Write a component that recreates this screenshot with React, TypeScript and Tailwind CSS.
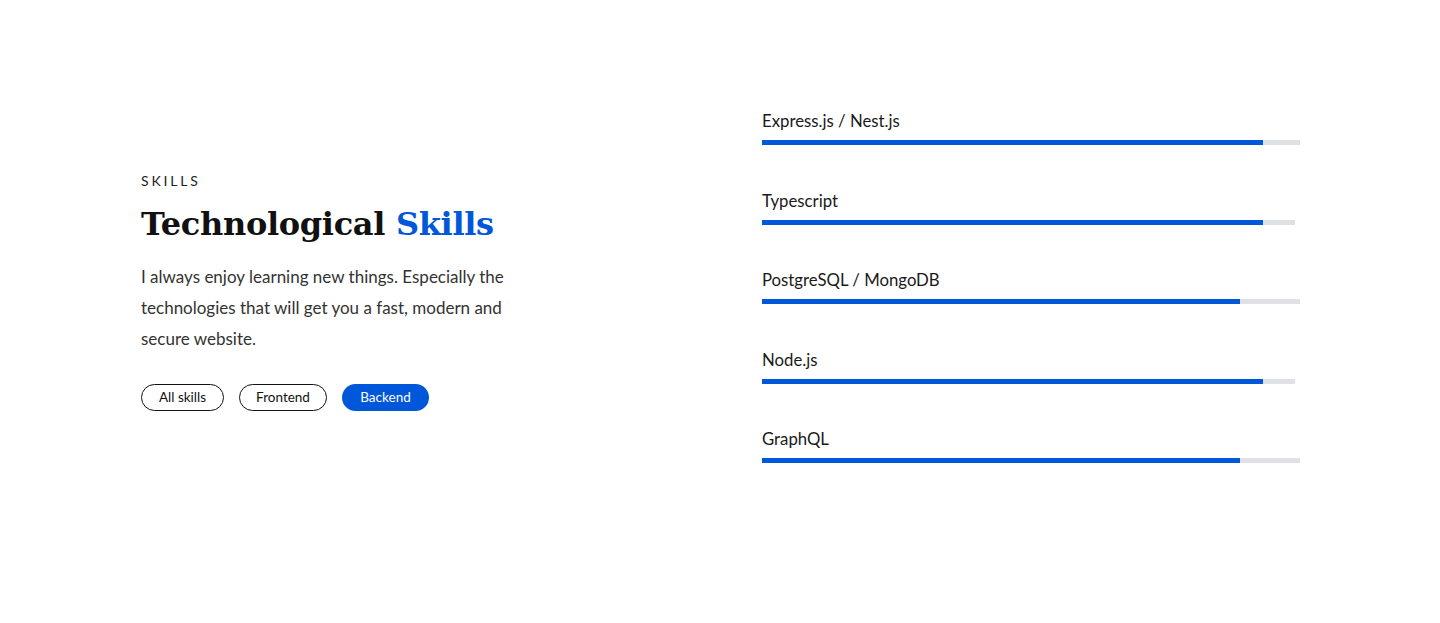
import React from "react";

const skills = [
  { name: "Express.js / Nest.js", fill: 501, track: 538 },
  { name: "Typescript", fill: 501, track: 533 },
  { name: "PostgreSQL / MongoDB", fill: 478, track: 538 },
  { name: "Node.js", fill: 501, track: 533 },
  { name: "GraphQL", fill: 478, track: 538 },
];

export default function App() {
  return (
    <div className="w-full h-[623px] bg-white font-['Lato','Noto_Sans',sans-serif] text-[#1a1a1a]">
      <div className="flex pt-[110px] pl-[141px]">
        <div className="w-[621px] pt-[63px]">
          <div className="text-[14px] leading-[16px] tracking-[0.2em] text-[#222]">SKILLS</div>
          <h2 className="mt-[13px] font-['DejaVu_Serif',serif] font-bold text-[32px] leading-[44px] text-[#111] tracking-[-0.01em]">
            Technological <span className="text-[#0057d9]">Skills</span>
          </h2>
          <p className="mt-[15px] w-[380px] text-[17px] leading-[31px] text-[#333]">
            I always enjoy learning new things. Especially the technologies that will get you a fast, modern and secure website.
          </p>
          <div className="mt-[30px] flex gap-[15px]">
            <button className="h-[27px] w-[83px] rounded-full border border-[#111] text-[13.5px] text-[#111]">All skills</button>
            <button className="h-[27px] w-[88px] rounded-full border border-[#111] text-[13.5px] text-[#111]">Frontend</button>
            <button className="h-[27px] w-[87px] rounded-full bg-[#0057d9] text-[13.5px] text-white">Backend</button>
          </div>
        </div>
        <div className="flex flex-col gap-[44.5px]">
          {skills.map((s) => (
            <div key={s.name}>
              <div className="text-[16.75px] leading-[22px] text-[#1a1a1a]">{s.name}</div>
              <div className="mt-[8px] h-[5px] bg-[#dfe1e5]" style={{ width: s.track }}>
                <div className="h-full bg-[#0057d9]" style={{ width: s.fill }} />
              </div>
            </div>
          ))}
        </div>
      </div>
    </div>
  );
}
